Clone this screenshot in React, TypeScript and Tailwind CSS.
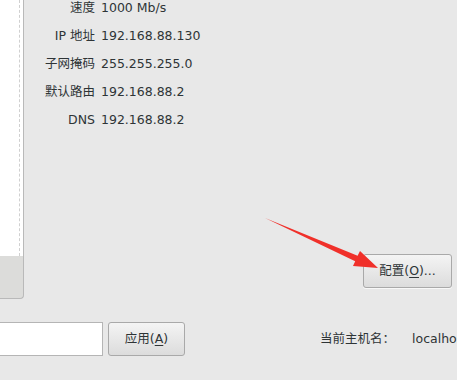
const ROWS: [string, string][] = [
  ["速度", "1000 Mb/s"],
  ["IP 地址", "192.168.88.130"],
  ["子网掩码", "255.255.255.0"],
  ["默认路由", "192.168.88.2"],
  ["DNS", "192.168.88.2"],
];

const FONT = "font-['DejaVu_Sans','Noto_Sans_CJK_SC',sans-serif]";

function Mnemonic({ label, k, tail = "" }: { label: string; k: string; tail?: string }) {
  return (
    <span>
      {label}(<span className="underline underline-offset-2">{k}</span>){tail}
    </span>
  );
}

export default function App() {
  return (
    <div className={`relative flex h-[380px] w-[457px] flex-col overflow-hidden bg-[#e8e8e8] text-[12.5px] text-[#2e3436] ${FONT}`}>
      {/* Top: device list edge + details */}
      <div className="flex h-[300px] shrink-0">
        <div className="flex w-[24px] shrink-0 flex-col">
          <div className="relative h-[256px] border-r border-[#b9b9b9] bg-white">
            <div className="absolute right-[3px] top-0 h-full border-r border-dashed border-[#d0d0d0]" />
          </div>
          <div className="h-[43px] rounded-br-[4px] border-b border-r border-[#b9b9b9] bg-[#dcdcda]" />
        </div>

        <div className="relative flex-1">
          <div className="-mt-[2px] grid grid-cols-[71px_auto] gap-x-[6px] gap-y-[9px] leading-[19px]">
            {ROWS.map(([k, v]) => (
              <div key={k} className="contents">
                <span className="text-right">{k}</span>
                <span>{v}</span>
              </div>
            ))}
          </div>

          <button className="absolute left-[339px] top-[254px] h-[34px] w-[89px] rounded-[3px] border border-[#a9a9a9] bg-gradient-to-b from-[#f4f4f4] to-[#dcdcdc] shadow-[0_1px_0_#f8f8f8]">
            <Mnemonic label="配置" k="O" tail="..." />
          </button>
        </div>
      </div>

      {/* Bottom row */}
      <div className="mt-[22px] flex shrink-0 items-center whitespace-nowrap">
        <div className="h-[34px] w-[103px] shrink-0 border border-l-0 border-[#b5b5b5] bg-white" />
        <button className="ml-[5px] h-[34px] w-[77px] shrink-0 rounded-[3px] border border-[#a9a9a9] bg-gradient-to-b from-[#f4f4f4] to-[#dcdcdc]">
          <Mnemonic label="应用" k="A" />
        </button>
        <span className="ml-[135px] shrink-0">当前主机名：</span>
        <span className="ml-[17px] shrink-0">localhost.localdomain</span>
      </div>

      {/* Red annotation arrow */}
      <svg className="pointer-events-none absolute left-0 top-0" width="457" height="380">
        <polygon points="265,218 357.6,255.8 360,251 378,268 353,266 355.2,261.2" fill="#f0302a" />
      </svg>
    </div>
  );
}
